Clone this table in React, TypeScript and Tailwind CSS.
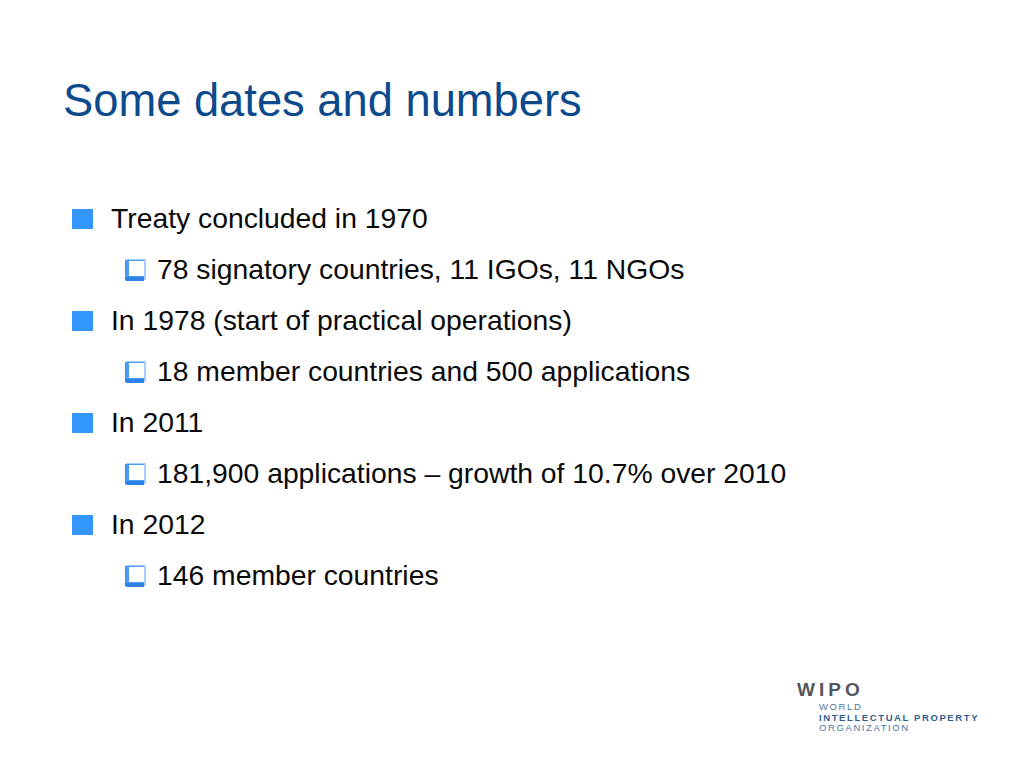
import React from "react";

const items = [
  { text: "Treaty concluded in 1970", sub: "78 signatory countries, 11 IGOs, 11 NGOs" },
  { text: "In 1978 (start of practical operations)", sub: "18 member countries and 500 applications" },
  { text: "In 2011", sub: "181,900 applications \u2013 growth of 10.7% over 2010" },
  { text: "In 2012", sub: "146 member countries" },
];

const HollowBox = () => (
  <svg width="21" height="22" viewBox="0 0 21 22" className="shrink-0">
    <path d="M0 1 H19 V20 H0 Z" fill="#3a8ef0" />
    <path d="M1 0 H21 V21 H1 Z" fill="#5aa6ff" opacity="0.55" />
    <rect x="4" y="2" width="15" height="15" fill="#ffffff" />
    <path d="M0 18 H19 V22 H2 Q0 22 0 20 Z" fill="#2f82e8" />
  </svg>
);

export default function App() {
  return (
    <div className="w-full h-screen bg-white flex flex-col" style={{ fontFamily: '"Liberation Sans", Arial, sans-serif' }}>
      <h1 className="pt-[78px] pl-[63px] text-[45.3px] leading-[45px] text-[#0d4a8c] font-normal">
        Some dates and numbers
      </h1>

      <div className="mt-[70px] flex flex-col text-[28.3px] leading-[51px] text-[#0a0a0a]">
        {items.map((it) => (
          <React.Fragment key={it.text}>
            <div className="flex items-center pl-[72px] h-[51px]">
              <span className="w-[21px] h-[20px] bg-[#3396fa] shrink-0" />
              <span className="ml-[18px]">{it.text}</span>
            </div>
            <div className="flex items-center pl-[125px] h-[51px]">
              <HollowBox />
              <span className="ml-[11px]">{it.sub}</span>
            </div>
          </React.Fragment>
        ))}
      </div>

      <div className="mt-[79px] pl-[797px] flex flex-col">
        <div className="text-[19px] leading-[19px] font-bold tracking-[4px] text-[#50565c]">WIPO</div>
        <div className="pl-[22px] mt-[3px] flex flex-col text-[9.5px] leading-[10.5px] tracking-[1.6px]">
          <span className="text-[#4a7aa6]">WORLD</span>
          <span className="font-bold text-[#2f5f8c]">INTELLECTUAL PROPERTY</span>
          <span className="text-[#4a7aa6]">ORGANIZATION</span>
        </div>
      </div>
    </div>
  );
}
